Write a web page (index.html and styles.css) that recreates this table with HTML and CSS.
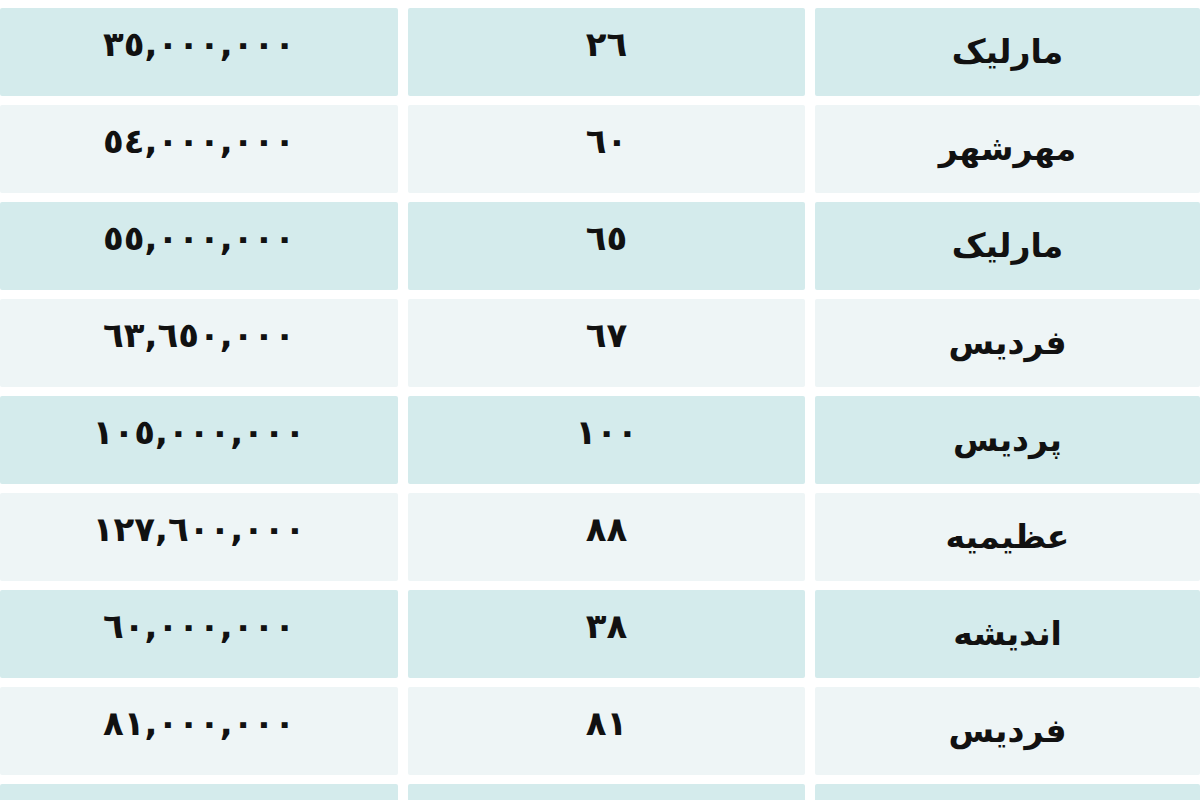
FILE: index.html
```html
<!DOCTYPE html>
<html lang="fa">
<head>
<meta charset="utf-8">
<title>جدول قیمت</title>
<link rel="stylesheet" href="styles.css">
</head>
<body>
<div class="table" dir="rtl">
  <div class="cell dark name">مارلیک</div><div class="cell dark num">٢٦</div><div class="cell dark price">٣٥,٠٠٠,٠٠٠</div>
  <div class="cell light name">مهرشهر</div><div class="cell light num">٦٠</div><div class="cell light price">٥٤,٠٠٠,٠٠٠</div>
  <div class="cell dark name">مارلیک</div><div class="cell dark num">٦٥</div><div class="cell dark price">٥٥,٠٠٠,٠٠٠</div>
  <div class="cell light name">فردیس</div><div class="cell light num">٦٧</div><div class="cell light price">٦٣,٦٥٠,٠٠٠</div>
  <div class="cell dark name">پردیس</div><div class="cell dark num">١٠٠</div><div class="cell dark price">١٠٥,٠٠٠,٠٠٠</div>
  <div class="cell light name">عظیمیه</div><div class="cell light num">٨٨</div><div class="cell light price">١٢٧,٦٠٠,٠٠٠</div>
  <div class="cell dark name">اندیشه</div><div class="cell dark num">٣٨</div><div class="cell dark price">٦٠,٠٠٠,٠٠٠</div>
  <div class="cell light name">فردیس</div><div class="cell light num">٨١</div><div class="cell light price">٨١,٠٠٠,٠٠٠</div>
  <div class="cell dark name">شهرک</div><div class="cell dark num">٩٠</div><div class="cell dark price">١٣٥,٠٠٠,٠٠٠</div>
</div>
</body>
</html>
```
FILE: styles.css
```css
html, body {
  margin: 0;
  padding: 0;
  background: #ffffff;
}
body {
  width: 1200px;
  height: 800px;
  overflow: hidden;
  font-family: "DejaVu Sans", sans-serif;
}
.table {
  display: grid;
  grid-template-columns: 1fr 397px 398px;
  grid-auto-rows: 88px;
  column-gap: 10px;
  row-gap: 9px;
  padding-top: 8px;
}
.cell {
  display: flex;
  align-items: center;
  justify-content: center;
  color: #111;
  font-weight: bold;
  border-radius: 2px;
}
.dark { background: #d4ebec; }
.light { background: #eef5f6; }
.name {
  font-size: 33px;
  padding-bottom: 2px;
}
.num, .price {
  font-size: 34px;
  padding-bottom: 16px;
}
.price { letter-spacing: 4.5px; }
```
